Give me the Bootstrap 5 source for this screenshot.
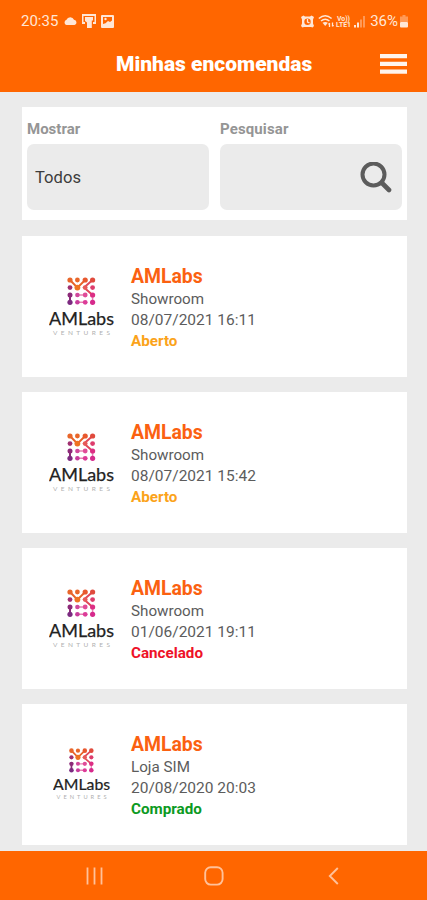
<!DOCTYPE html>
<html lang="pt">
<head>
<meta charset="utf-8">
<meta name="viewport" content="width=device-width, initial-scale=1">
<title>Minhas encomendas</title>
<link href="https://cdn.jsdelivr.net/npm/bootstrap@5.3.0/dist/css/bootstrap.min.css" rel="stylesheet">
<style>
body{font-family:Roboto,"Liberation Sans",sans-serif;background:#ebebeb;color:#5c5c5c;height:900px;overflow:hidden}
svg{display:block;flex-shrink:0}
.top-area{background:#f60;height:92px;color:#fff}
.status-row{height:42px;padding:0 18px 0 21px;font-size:15px;color:#ffe6d6}
.title-row{height:50px;padding:0 20px 7px 116px}
.title-row h1{font-size:21px;font-weight:900;line-height:1;padding-top:2px;white-space:nowrap}
.page-main{height:759px;padding:15px 20px 0 22px;gap:15px}
.filter-box{height:113px;padding:12px 5px 0;gap:11px;flex-shrink:0;margin-bottom:1px}
.filter-box label{font-size:15px;font-weight:700;line-height:20px;color:#959595;margin-bottom:5px;display:block}
.filter-box .label-search{letter-spacing:.12px}
.field-box{height:66px;background:#ebebeb;border-radius:7px;padding:2px 10px 0 8px;color:#3c3c3c;font-size:16.6px}
.order{height:141.1px;flex-shrink:0}
.order-text{padding-top:2px}
.logo-cell{width:109px;padding:0 0 2px 27px}
.order-name{font-size:19.4px;font-weight:700;line-height:25px;color:#fb6110}
.order-line{font-size:15.5px;line-height:21px}
.line-place{font-size:15.2px}
.order-state{font-size:15.2px;font-weight:700;line-height:21px}
.st-open{color:#fba31a}.st-cancel{color:#ee1228}.st-done{color:#0c9a22}
.nav-keys{background:#f60;height:49px;color:#ffc19a;padding:0 88px 0 86px}
.key-home{margin-right:4px}
</style>
<script src="https://cdn.jsdelivr.net/npm/bootstrap@5.3.0/dist/js/bootstrap.bundle.min.js"></script>
</head>
<body>
<header class="top-area">
  <div class="status-row d-flex align-items-center justify-content-between">
    <div class="d-flex align-items-center">
      <span>20:35</span>
      <svg class="ms-1" width="17" height="14" viewBox="0 0 17 14" fill="currentColor"><path d="M4.500 11a2.700 2.700 0 0 1 0-5.200 4 4 0 0 1 7.500-.1 2.700 2.700 0 0 1 .5 5.300z"/></svg>
      <svg width="14" height="14" viewBox="0 0 14 14" fill="currentColor" style="margin-left:3px"><path d="M0 0h14v10h-3V8H12.500V2H1.500v6H3v2H0z"/><path d="M3 3h8v3.500H9.800V14H5V8.500L3 7z"/></svg>
      <svg width="13" height="13" viewBox="0 0 13 13" style="margin-left:5px"><rect width="13" height="13" rx="1" fill="currentColor"/><path d="M2 2h9v3.400L9 7 7 6 4.500 8.200 2 9z" fill="#f60"/><circle cx="4.500" cy="4" r="1.200" fill="currentColor"/></svg>
    </div>
    <div class="d-flex align-items-center">
      <svg width="13" height="13" viewBox="0 0 13 13" style="margin-right:-1px"><path d="M0 2L2.500 .5 4 1.500h5L10.500 .5 13 2l-1 2.500v4L13 11l-1.500 1.500L10 12H3l-1.500.5L0 11l1-2.500v-4z" fill="currentColor"/><circle cx="6.500" cy="6.700" r="3.200" fill="#f60"/><path d="M6.500 4v3l2 .8" fill="none" stroke="currentColor" stroke-width="1.300"/></svg>
      <svg width="17" height="14" viewBox="0 0 17 14" style="margin-left:5px" fill="none" stroke="currentColor" stroke-width="1.500"><path d="M.8 4.500q6.400-5.600 12.800 0M3 7q4.200-3.600 8.400 0"/><path d="M4.500 8.800Q7.200 7 9.900 8.800L7.200 12z" fill="currentColor" stroke="none"/><path d="M11.500 13V9m-1 1.500l1-1.500M14.500 8.500v4m1-1.500l-1 1.500" stroke-width="1.300"/></svg>
      <svg width="18" height="14" viewBox="0 0 18 14" fill="currentColor" font-family="Roboto, sans-serif" font-size="7" font-weight="700"><text x="2" y="6.500" textLength="13" lengthAdjust="spacingAndGlyphs">Vo))</text><text x="1" y="13" textLength="15" lengthAdjust="spacingAndGlyphs">LTE1</text></svg>
      <svg width="12" height="13" viewBox="0 0 12 13" fill="currentColor" style="margin-left:1px"><path d="M0 10h2v2.500H0zM3 7.500h2v5H3z"/><path d="M6 4.500h2v8H6zM9 1h2v11.500H9z" opacity=".4"/></svg>
      <span style="margin-left:4px">36%</span>
      <svg width="10" height="13" viewBox="0 0 10 13" style="margin-left:1px" fill="currentColor"><path d="M3.500 0h3v1.500H9V7H1V1.500h2.500z" opacity=".4"/><rect x="1" y="7" width="8" height="5.500" rx="1"/></svg>
    </div>
  </div>
  <div class="title-row d-flex align-items-center justify-content-between">
    <h1 class="mb-0">Minhas encomendas</h1>
    <svg width="27" height="20" viewBox="0 0 27 20" fill="#fff4ec"><path d="M0 0h27v4.300H0zM0 7.700h27V12H0zM0 15.400h27v4.300H0z"/></svg>
  </div>
</header>

<main class="page-main d-flex flex-column">
  <section class="filter-box bg-white d-flex">
    <div class="flex-fill w-50">
      <label>Mostrar</label>
      <div class="field-box d-flex align-items-center">Todos</div>
    </div>
    <div class="flex-fill w-50">
      <label class="label-search">Pesquisar</label>
      <div class="field-box d-flex align-items-center justify-content-end">
        <svg width="32" height="32" viewBox="0 0 32 32" fill="none" stroke="#5c5c5c"><circle cx="13.500" cy="12.500" r="11" stroke-width="4"/><path d="M22 21L29 28" stroke-width="4.600" stroke-linecap="round"/></svg>
      </div>
    </div>
  </section>

  <article class="order bg-white d-flex align-items-center">
    <div class="logo-cell">
      <svg width="66" height="60" viewBox="0 0 66 60">
        <g id="amlabs">
          <g fill="none" stroke-width="2">
            <path d="M21 4l7.400 7.600L36.200 4" stroke="#e8622a"/>
            <path d="M43.600 4L35 11.600l8.600 7.400" stroke="#e0485a"/>
            <path d="M21 19v7.300" stroke="#8c2a78"/>
            <path d="M28.400 19h7.800M28.400 26.300h7.800M43.600 19v7.300" stroke="#e882b4" stroke-width="1.500"/>
          </g>
          <circle cx="21" cy="4" r="2.600" fill="#e8662a"/><circle cx="28.400" cy="4" r="2.400" fill="#e8662a"/><circle cx="36.200" cy="4" r="2.600" fill="#e8582e"/><circle cx="43.600" cy="4" r="2.600" fill="#e04a3c"/>
          <circle cx="21" cy="11.600" r="2.400" fill="#a03070"/><circle cx="28.400" cy="11.600" r="2.900" fill="#ee7422"/><circle cx="36.200" cy="11.600" r="2.400" fill="#e65a58"/><circle cx="43.600" cy="11.600" r="2.400" fill="#dd3c6c"/>
          <circle cx="21" cy="19" r="2.500" fill="#8c2a78"/><circle cx="28.400" cy="19" r="2.300" fill="#d0489c"/><circle cx="36.200" cy="19" r="2.400" fill="#e04c98"/><circle cx="43.600" cy="19" r="2.600" fill="#dc2e84"/>
          <circle cx="21" cy="26.300" r="2.600" fill="#7c2a80"/><circle cx="28.400" cy="26.300" r="2.300" fill="#c83c9c"/><circle cx="36.200" cy="26.300" r="2.400" fill="#dc3c98"/><circle cx="43.600" cy="26.300" r="2.600" fill="#d62a8c"/>
          <text x="0" y="48.600" font-family="Lato, sans-serif" font-size="17.500" textLength="65" lengthAdjust="spacingAndGlyphs" fill="#222" stroke="#222" stroke-width=".25">AMLabs</text>
          <text x="4" y="58.600" font-family="Lato, sans-serif" font-size="6.500" textLength="57" fill="#b0b0b0">VENTURES</text>
        </g>
      </svg>
    </div>
    <div class="order-text"><div class="order-name">AMLabs</div><div class="order-line line-place">Showroom</div><div class="order-line">08/07/2021 16:11</div><div class="order-state st-open">Aberto</div></div>
  </article>
  <article class="order bg-white d-flex align-items-center">
    <div class="logo-cell"><svg width="66" height="60" viewBox="0 0 66 60"><use href="#amlabs"/></svg></div>
    <div class="order-text"><div class="order-name">AMLabs</div><div class="order-line line-place">Showroom</div><div class="order-line">08/07/2021 15:42</div><div class="order-state st-open">Aberto</div></div>
  </article>
  <article class="order bg-white d-flex align-items-center">
    <div class="logo-cell"><svg width="66" height="60" viewBox="0 0 66 60"><use href="#amlabs"/></svg></div>
    <div class="order-text"><div class="order-name">AMLabs</div><div class="order-line line-place">Showroom</div><div class="order-line">01/06/2021 19:11</div><div class="order-state st-cancel">Cancelado</div></div>
  </article>
  <article class="order bg-white d-flex align-items-center">
    <div class="logo-cell"><svg class="ms-1" width="58" height="53" viewBox="0 0 66 60"><use href="#amlabs"/></svg></div>
    <div class="order-text"><div class="order-name">AMLabs</div><div class="order-line line-place">Loja SIM</div><div class="order-line">20/08/2020 20:03</div><div class="order-state st-done">Comprado</div></div>
  </article>
</main>

<footer class="nav-keys d-flex align-items-center justify-content-between">
  <svg width="17" height="18" viewBox="0 0 17 18" stroke="currentColor" stroke-width="1.800"><path d="M1.500 .5v17M8.500 .5v17M15.500 .5v17"/></svg>
  <svg class="key-home" width="20" height="20" viewBox="0 0 20 20" fill="none" stroke="currentColor" stroke-width="1.900"><rect x="1.200" y="1.200" width="17.400" height="17.400" rx="5.500"/></svg>
  <svg width="11" height="18" viewBox="0 0 11 18" fill="none" stroke="currentColor" stroke-width="1.900"><path d="M9.800 1L1.800 9l8 8"/></svg>
</footer>
</body>
</html>
